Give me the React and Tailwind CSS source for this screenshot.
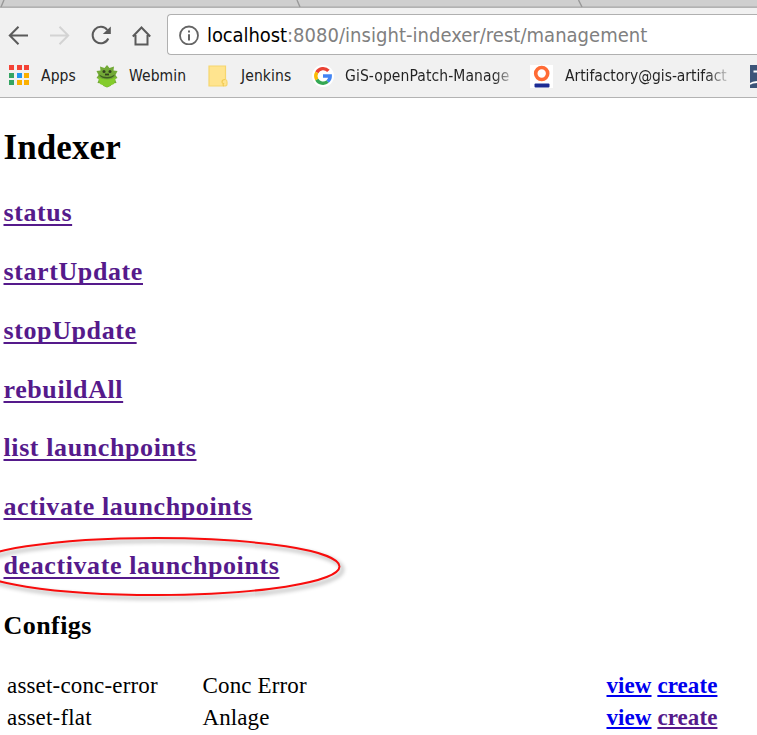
import React from "react";

const links = [
  "status",
  "startUpdate",
  "stopUpdate",
  "rebuildAll",
  "list launchpoints",
  "activate launchpoints",
  "deactivate launchpoints",
];

function TabStrip() {
  return (
    <svg className="block h-2 w-full shrink-0" viewBox="0 0 757 8" preserveAspectRatio="none">
      <rect width="757" height="8" fill="#cfcfcf" />
      <path d="M0 7.2H757" stroke="#a8a8a8" strokeWidth="1.2" />
      <path d="M4 0L1 7M297 0L300 7M578.500 0L582 7" stroke="#999" strokeWidth="1.4" fill="none" />
    </svg>
  );
}

function NavIcons() {
  return (
    <svg className="h-10 w-[167px] shrink-0" viewBox="0 0 167 40" fill="none" stroke="#5a5a5a" strokeWidth="2">
      <path d="M28 20.500H10M18.500 11.700L9.800 20.500L18.500 29.300" />
      <path d="M50 20.500H68M59.500 11.700L68.200 20.500L59.500 29.300" stroke="#d3d3d3" />
      <path d="M107.300 15A8.200 8.200 0 1 0 108.300 23.500" />
      <path d="M110.800 11.500V19H102.800Z" fill="#5a5a5a" stroke="none" />
      <path d="M132.800 21.500L141.500 12.500L150.200 21.500M135.500 20V29.500H147.500V20" />
    </svg>
  );
}

function InfoIcon() {
  return (
    <svg className="h-5 w-5 shrink-0" viewBox="0 0 20 20" fill="none" stroke="#646464" strokeWidth="1.8">
      <circle cx="10" cy="10.500" r="9" />
      <path d="M10 9.300V15.500M10 5.500V7.500" strokeWidth="2" />
    </svg>
  );
}

function AppsIcon() {
  const colors = ["#f44336", "#f44336", "#f44336", "#34a463", "#2196f3", "#fbb000", "#34a463", "#fbb000", "#fbb000"];
  return (
    <div className="mb-[2px] grid shrink-0 grid-cols-[5px_5px_5px] gap-[2.5px]">
      {colors.map((c, i) => (
        <i key={i} className="h-[5px] w-[5px]" style={{ backgroundColor: c }} />
      ))}
    </div>
  );
}

function WebminIcon() {
  return (
    <svg className="h-[23px] w-[22px] shrink-0" viewBox="0 0 22 23">
      <path d="M11 0L13.500 3L18 1.500L17.500 5.500L21.500 6L19.500 10L21.500 13L19 14L20.500 18L16 18.500L14.500 21L11 22.500L7.500 21L6 18.500L1.500 18L3 14L.5 13L2.500 10L.5 6L4.500 5.500L4 1.500L8.500 3Z" fill="#72a936" />
      <path d="M2 12Q11 17 20 12L18 19L11 22L4 19Z" fill="#84cc2c" />
      <path d="M3 9.500Q11 14.500 19 9.500Q17 13.500 11 13.500Q5 13.500 3 9.500Z" fill="#3f5f22" />
      <circle cx="8" cy="6.500" r="1.500" fill="#33421e" />
      <circle cx="14" cy="6.500" r="1.500" fill="#33421e" />
      <path d="M9 9.500H13" stroke="#33421e" strokeWidth="1.800" />
    </svg>
  );
}

function FolderIcon() {
  return (
    <svg className="h-[22px] w-5 shrink-0" viewBox="0 0 20 22">
      <path d="M1 1H17.500V14.500Q19 15 19 17V19Q19 21 16.500 21H1Z" fill="#ffe48f" stroke="#f6d66e" strokeWidth="1.200" />
      <path d="M17 14.500Q14 14.500 14 17Q14 18.500 15.500 18.500Q14.500 20.500 16 21" fill="none" stroke="#f1cb53" strokeWidth="1.200" />
    </svg>
  );
}

function GoogleIcon() {
  return (
    <svg className="h-[22px] w-[22px] shrink-0" viewBox="0 0 22 22" fill="none" strokeWidth="3.400">
      <circle cx="11" cy="11" r="11" fill="#fff" />
      <path d="M16.400 5.900A7.200 7.200 0 0 0 4.800 7.400" stroke="#ea4335" />
      <path d="M4.800 7.400A7.200 7.200 0 0 0 4.800 14.600" stroke="#fbbc05" />
      <path d="M4.800 14.600A7.200 7.200 0 0 0 15.700 16.500" stroke="#34a853" />
      <path d="M15.700 16.500A7.200 7.200 0 0 0 18.200 11H11" stroke="#4285f4" />
    </svg>
  );
}

function ArtifactoryIcon() {
  return (
    <svg className="h-[23px] w-[23px] shrink-0" viewBox="0 0 23 23">
      <rect width="23" height="23" fill="#fff" />
      <circle cx="11.700" cy="8.500" r="6" fill="none" stroke="#ff6b35" strokeWidth="3.600" />
      <rect x="4.500" y="18.500" width="15" height="4" rx="1" fill="#1d2c94" />
    </svg>
  );
}

function SiteIcon() {
  return (
    <svg className="h-[23px] w-[7px] shrink-0" viewBox="0 0 7 23">
      <rect width="7" height="23" fill="#3c5478" />
      <path d="M3.500 6.500H7M0 19L3 17.500L7 17" stroke="#fff" strokeWidth="1.800" fill="none" />
    </svg>
  );
}

export default function App() {
  return (
    <div className="flex h-[735px] w-[757px] flex-col overflow-hidden bg-white text-black">
      <header className="flex h-[98px] shrink-0 flex-col border-b border-[#b3b3b3] bg-[#f1f1f1] font-['DejaVu_Sans_Condensed','DejaVu_Sans',sans-serif] [font-stretch:condensed]">
        <TabStrip />
        <div className="mt-[6px] flex h-[41px] items-center">
          <NavIcons />
          <div className="flex h-[41px] flex-1 items-center rounded-l border border-r-0 border-[#b0b0b0] bg-white pl-[11px] text-[20px]">
            <InfoIcon />
            <span className="ml-[8px] whitespace-nowrap text-[#808080]">
              <span className="inline-block w-[80px] tracking-[-0.1px] text-black">localhost</span>
              <span className="tracking-[0.03px]">:8080/insight-indexer/rest/management</span>
            </span>
          </div>
        </div>
        <nav className="flex h-[42px] items-center whitespace-nowrap pl-[9px] text-[15.500px] tracking-[0.1px] text-[#222]">
          <AppsIcon />
          <span className="ml-[12px] mt-px w-[55px]">Apps</span>
          <WebminIcon />
          <span className="ml-[11px] mt-px w-[79px]">Webmin</span>
          <FolderIcon />
          <span className="ml-[13px] mt-px w-[71px]">Jenkins</span>
          <GoogleIcon />
          <span className="ml-[11px] mt-px w-[169px] bg-linear-to-r from-[#222] from-[88%] to-[#22222220] bg-clip-text text-transparent">GiS-openPatch-Manage</span>
          <span className="ml-[16px] flex"><ArtifactoryIcon /></span>
          <span className="ml-[12px] mr-[18px] mt-px w-[167px] bg-linear-to-r from-[#222] from-[85%] to-transparent bg-clip-text tracking-[-0.05px] text-transparent">Artifactory@gis-artifact</span>
          <SiteIcon />
        </nav>
      </header>
      <main className="relative flex-1 pl-[3.500px] font-['Liberation_Serif','Times_New_Roman',serif]">
        <h1 className="mt-[30px] h-[53px] text-[35px] font-bold leading-[40px] tracking-[0.1px]">Indexer</h1>
        {links.map((label) => (
          <h2 key={label} className="h-[58.860px] text-[26px] font-bold leading-[64px] tracking-[0.6px]">
            <a className="text-[#551a8b] underline decoration-2 underline-offset-[3px] [text-decoration-skip-ink:none]">{label}</a>
          </h2>
        ))}
        <h2 className="h-[77px] pt-px text-[26px] font-bold leading-[64px] tracking-[0.45px]">Configs</h2>
        <div className="grid grid-cols-[195.500px_404px_1fr] pl-[3.500px] text-[23px] leading-[31.500px]">
          <span className="tracking-[0.17px]">asset-conc-error</span>
          <span className="tracking-[0.15px]">Conc Error</span>
          <span className="whitespace-nowrap font-bold tracking-[0.08px] text-[#0000ee]">
            <a className="underline decoration-2 underline-offset-2">view</a>{" "}
            <a className="underline decoration-2 underline-offset-2">create</a>
          </span>
          <span className="tracking-[0.17px]">asset-flat</span>
          <span className="tracking-[0.1px]">Anlage</span>
          <span className="whitespace-nowrap font-bold tracking-[0.08px] text-[#0000ee]">
            <a className="underline decoration-2 underline-offset-2">view</a>{" "}
            <a className="text-[#551a8b] underline decoration-2 underline-offset-2">create</a>
          </span>
        </div>
        <svg className="pointer-events-none absolute left-0 top-[432px] h-[75px] w-[350px]" viewBox="0 0 350 75" fill="none">
          <ellipse cx="156" cy="36.500" rx="183.500" ry="28.500" stroke="#f80c0c" strokeWidth="2" className="drop-shadow-[3px_3px_2px_rgba(0,0,0,0.4)]" />
        </svg>
      </main>
    </div>
  );
}
